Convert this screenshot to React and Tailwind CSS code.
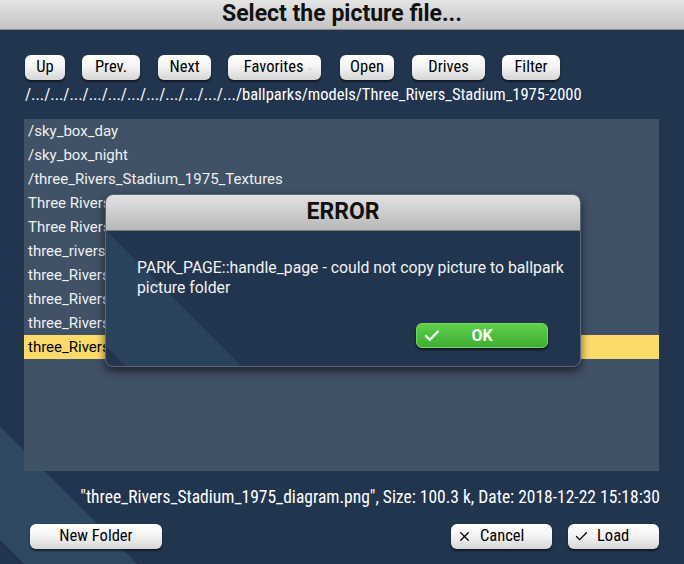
import { Check, X } from "lucide-react";

const toolbar = [
  { label: "Up", cls: "w-[40px]" },
  { label: "Prev.", cls: "w-[58px] ml-[17px]" },
  { label: "Next", cls: "w-[53px] ml-[18px]" },
  { label: "Favorites", cls: "w-[93px] ml-[17px]", menu: true },
  { label: "Open", cls: "w-[54px] ml-[19px]" },
  { label: "Drives", cls: "w-[73px] ml-[18px]" },
  { label: "Filter", cls: "w-[58px] ml-[17px]" },
];

const files = [
  "/sky_box_day",
  "/sky_box_night",
  "/three_Rivers_Stadium_1975_Textures",
  "Three Rivers Stadium 1975.bpk",
  "Three Rivers Stadium 1975.txt",
  "three_rivers_stadium_1975.bsp",
  "three_Rivers_Stadium_1975_aerial.png",
  "three_Rivers_Stadium_1975_cover.png",
  "three_Rivers_Stadium_1975_dims.png",
  "three_Rivers_Stadium_1975_diagram.png",
];

const condensed = "font-['Roboto_Condensed','Liberation_Sans_Narrow','DejaVu_Sans_Condensed',Roboto,sans-serif]";

function GlossButton({ children, className }) {
  return (
    <button
      className={`h-[25px] rounded-[6px] bg-[linear-gradient(#ffffff,#f4f4f4_45%,#d6d6d6)] shadow-[0_2px_2px_rgba(0,0,0,0.55)] text-black text-[16.5px] ${condensed} ${className}`}
    >
      {children}
    </button>
  );
}

export default function App() {
  return (
    <div className="relative w-[684px] h-[564px] overflow-hidden bg-[#22354f] bg-[linear-gradient(45deg,transparent_2%,rgba(80,120,150,0.28)_2%,rgba(80,120,150,0.28)_11%,transparent_11%)] font-['Roboto',sans-serif]">
      <div className="h-[30px] flex items-center justify-center bg-[linear-gradient(#e4e4e4,#c4c4c4)] border-b border-[#8a8a8a]">
        <h1 className="text-[23px] font-bold text-[#111]">Select the picture file...</h1>
      </div>

      <div className="flex pl-[25px] pt-[25px]">
        {toolbar.map((b) => (
          <GlossButton key={b.label} className={`${b.cls} flex items-center justify-center gap-[3px]`}>
            <span>{b.label}</span>
            {b.menu && <span className="text-[9px] text-[#c8c8c8] -mr-[8px]">⌄</span>}
          </GlossButton>
        ))}
      </div>

      <p className={`pl-[25px] pt-[2px] h-[25px] text-[16.5px] text-white leading-[25px] ${condensed}`}>
        /.../.../.../.../.../.../.../.../.../.../.../ballparks/models/Three_Rivers_Stadium_1975-2000
      </p>

      <div className="mx-[24px] mt-[14px] w-[635px] h-[352px] bg-[#415166]">
        {files.map((f, i) => (
          <div
            key={f}
            className={`h-[24px] pl-[4px] flex items-center text-[15px] ${i === files.length - 1 ? "bg-[#fddb6b] text-black" : "text-[#eef0f2]"}`}
          >
            {f}
          </div>
        ))}
      </div>

      <p className={`mt-[15px] pr-[24px] text-right text-[17.5px] text-white leading-[22px] ${condensed}`}>
        "three_Rivers_Stadium_1975_diagram.png", Size: 100.3 k, Date: 2018-12-22 15:18:30
      </p>

      <div className="flex items-center px-[25px] mt-[16px]">
        <GlossButton className="w-[132px] ml-[5px]">New Folder</GlossButton>
        <GlossButton className="w-[101px] ml-auto flex items-center pl-[6px] gap-[8px]">
          <X size={15} strokeWidth={2} />
          <span>Cancel</span>
        </GlossButton>
        <GlossButton className="w-[91px] ml-[16px] flex items-center pl-[6px] gap-[8px]">
          <Check size={15} strokeWidth={2} />
          <span>Load</span>
        </GlossButton>
      </div>

      <div className="absolute left-[105px] top-[194px] w-[476px] h-[173px] rounded-[8px] overflow-hidden border border-[#5a6a7e] shadow-[0_4px_10px_rgba(0,0,0,0.6)] bg-[#22354f] bg-[linear-gradient(45deg,transparent_3%,rgba(80,120,150,0.2)_3%,rgba(80,120,150,0.2)_21%,transparent_21%)]">
        <div className="h-[36px] flex items-center justify-center bg-[linear-gradient(#e2e2e2,#b8b8b8)] border-b border-[#7c7c7c]">
          <h2 className="text-[23px] font-bold text-[#111]">ERROR</h2>
        </div>
        <p className="pl-[31px] pr-[16px] pt-[27px] text-[15.8px] leading-[20px] text-[#f2f2f2]">
          PARK_PAGE::handle_page - could not copy picture to ballpark picture folder
        </p>
        <div className="flex justify-end pr-[32px] mt-[25px]">
          <button className="w-[132px] h-[25px] rounded-[6px] bg-[linear-gradient(#5fcf4c,#3fae34)] border border-[#72d860] shadow-[0_2px_3px_rgba(0,0,0,0.6)] flex items-center text-white font-bold text-[16px]">
            <Check size={18} strokeWidth={3} className="ml-[6px]" />
            <span className="flex-1 pr-[24px]">OK</span>
          </button>
        </div>
      </div>
    </div>
  );
}
